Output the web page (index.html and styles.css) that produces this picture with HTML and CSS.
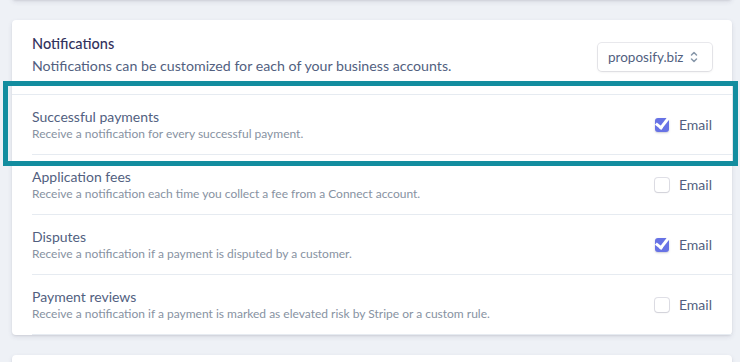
FILE: index.html
```html
<!DOCTYPE html>
<html lang="en">
<head>
    <meta charset="UTF-8">
    <meta name="viewport" content="width=device-width, initial-scale=1.0">
    <title>Notifications</title>
    <link rel="stylesheet" href="styles.css">
</head>
<body>

    <div class="card card-prev"></div>

    <div class="card">
        <div class="card-header">
            <div>
                <h2>Notifications</h2>
                <p>Notifications can be customized for each of your business accounts.</p>
            </div>
            <div class="select">
                <span>proposify.biz</span>
                <svg width="8" height="14" viewBox="0 0 8 14">
                    <path d="M1.5 5 L4 2.5 L6.5 5 M1.5 9 L4 11.5 L6.5 9" fill="none" stroke="#8898aa" stroke-width="1.5" stroke-linecap="round" stroke-linejoin="round"/>
                </svg>
            </div>
        </div>

        <div class="row">
            <div>
                <div class="row-title">Successful payments</div>
                <div class="row-desc">Receive a notification for every successful payment.</div>
            </div>
            <label class="option"><span class="check checked"></span>Email</label>
        </div>
        <div class="row">
            <div>
                <div class="row-title">Application fees</div>
                <div class="row-desc">Receive a notification each time you collect a fee from a Connect account.</div>
            </div>
            <label class="option"><span class="check"></span>Email</label>
        </div>
        <div class="row">
            <div>
                <div class="row-title">Disputes</div>
                <div class="row-desc">Receive a notification if a payment is disputed by a customer.</div>
            </div>
            <label class="option"><span class="check checked"></span>Email</label>
        </div>
        <div class="row">
            <div>
                <div class="row-title">Payment reviews</div>
                <div class="row-desc">Receive a notification if a payment is marked as elevated risk by Stripe or a custom rule.</div>
            </div>
            <label class="option"><span class="check"></span>Email</label>
        </div>

        <div class="highlight"></div>
    </div>

    <div class="card card-next"></div>

</body>
</html>
```

FILE: styles.css
```css
body {
    font-family: Lato, "Open Sans", sans-serif;
    background-color: #eef1f6;
    color: #525f7f;
    margin: 0;
    padding: 0 8px 0 12px;
    width: 720px;
}

.card {
    position: relative;
    background-color: #ffffff;
    border-radius: 4px;
    box-shadow: 0 2px 5px rgba(50, 50, 93, 0.1), 0 1px 2px rgba(0, 0, 0, 0.07);
    margin-bottom: 20px;
}

.card-prev {
    height: 40px;
    margin-top: -40px;
}

.card-next {
    height: 40px;
}

.card-header {
    display: flex;
    justify-content: space-between;
    align-items: center;
    padding: 13px 20px 17px;
    border-bottom: 1px solid #e6ebf1;
}

h2 {
    margin: 0;
    font-size: 14.5px;
    line-height: 22px;
    font-weight: 500;
    color: #32325d;
}

.card-header p {
    margin: 0;
    font-size: 14.2px;
    line-height: 22px;
    color: #525f7f;
}

.select {
    display: flex;
    align-items: center;
    gap: 7px;
    width: 114px;
    height: 28px;
    box-sizing: border-box;
    padding: 0 9px 0 10px;
    border-radius: 4px;
    box-shadow: 0 0 0 1px rgba(50, 50, 93, 0.1), 0 1px 3px rgba(0, 0, 0, 0.08);
    font-size: 13.5px;
    color: #525f7f;
    margin-top: 4px;
}

.row {
    display: flex;
    justify-content: space-between;
    align-items: center;
    height: 60px;
    box-sizing: border-box;
    margin-left: 20px;
    padding-right: 20px;
    border-bottom: 1px solid #e6ebf1;
}

.row:last-of-type {
    border-bottom: none;
}

.row-title {
    font-size: 14px;
    line-height: 18px;
    color: #525f7f;
}

.row-desc {
    font-size: 12px;
    line-height: 16px;
    color: #8792a2;
}

.option {
    display: flex;
    align-items: center;
    gap: 10px;
    font-size: 14px;
    color: #525f7f;
}

.check {
    position: relative;
    width: 14px;
    height: 14px;
    box-sizing: border-box;
    border-radius: 3px;
    background-color: #fff;
    box-shadow: 0 0 0 1px rgba(50, 50, 93, 0.15), 0 1px 2px rgba(0, 0, 0, 0.08);
}

.check.checked {
    background-color: #6772e5;
    box-shadow: 0 1px 2px rgba(50, 50, 93, 0.25);
}

.check.checked::after {
    content: "";
    position: absolute;
    left: 4px;
    top: -5px;
    width: 5px;
    height: 13px;
    border-right: 3px solid #fff;
    border-bottom: 3px solid #fff;
    transform: rotate(38deg);
}

.highlight {
    position: absolute;
    left: -9px;
    top: 61px;
    width: 735px;
    height: 85px;
    box-sizing: border-box;
    border: 5px solid #138d9f;
    pointer-events: none;
}
```
